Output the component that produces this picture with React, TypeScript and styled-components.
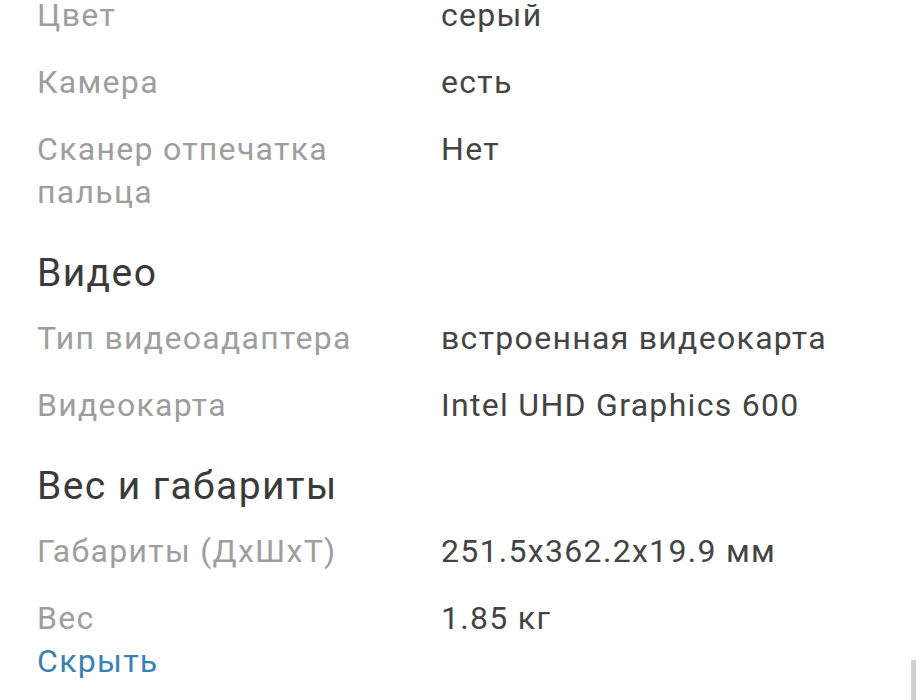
import React from "react";
import styled, { createGlobalStyle } from "styled-components";

const Global = createGlobalStyle`
  html, body { margin: 0; padding: 0; background: #ffffff; overflow: hidden; }
  body { font-family: Roboto, "Noto Sans", Arial, sans-serif; }
`;

const Page = styled.div`
  position: relative;
  width: 923px;
  height: 700px;
  overflow: hidden;
  background: #fff;
`;

const Content = styled.div`
  display: flex;
  flex-direction: column;
  padding: 0 37px;
  margin-top: -6px;
  letter-spacing: 1.3px;
`;

const Heading = styled.h2`
  margin: 11px 0 20px;
  font-size: 39px;
  line-height: 48px;
  font-weight: 400;
  letter-spacing: 1.4px;
  color: #3a3a3a;
`;

const Row = styled.div<{ $last?: boolean }>`
  display: grid;
  grid-template-columns: 404px 1fr;
  font-size: 32px;
  line-height: 43px;
  margin-bottom: ${(p) => (p.$last ? "0" : "24px")};
`;

const Label = styled.div`
  color: #9e9e9e;
  padding-right: 20px;
`;

const Value = styled.div`
  color: #444444;
`;

const Toggle = styled.a`
  font-size: 32px;
  line-height: 43px;
  color: #3b82b4;
  text-decoration: none;
`;

const ScrollThumb = styled.div`
  position: absolute;
  right: 7px;
  bottom: 0;
  width: 5px;
  height: 40px;
  background: #d0d0d0;
`;

type Spec = [string, string];

const general: Spec[] = [
  ["Цвет", "серый"],
  ["Камера", "есть"],
  ["Сканер отпечатка пальца", "Нет"],
];
const video: Spec[] = [
  ["Тип видеоадаптера", "встроенная видеокарта"],
  ["Видеокарта", "Intel UHD Graphics 600"],
];
const dims: Spec[] = [
  ["Габариты (ДхШхТ)", "251.5x362.2x19.9 мм"],
  ["Вес", "1.85 кг"],
];

const Rows = ({ items, lastFlush }: { items: Spec[]; lastFlush?: boolean }) => (
  <>
    {items.map(([l, v], i) => (
      <Row key={l} $last={lastFlush && i === items.length - 1}>
        <Label>{l}</Label>
        <Value>{v}</Value>
      </Row>
    ))}
  </>
);

export default function App() {
  return (
    <Page>
      <Global />
      <Content>
        <Rows items={general} />
        <Heading>Видео</Heading>
        <Rows items={video} />
        <Heading>Вес и габариты</Heading>
        <Rows items={dims} lastFlush />
        <Toggle href="#">Скрыть</Toggle>
      </Content>
      <ScrollThumb />
    </Page>
  );
}
